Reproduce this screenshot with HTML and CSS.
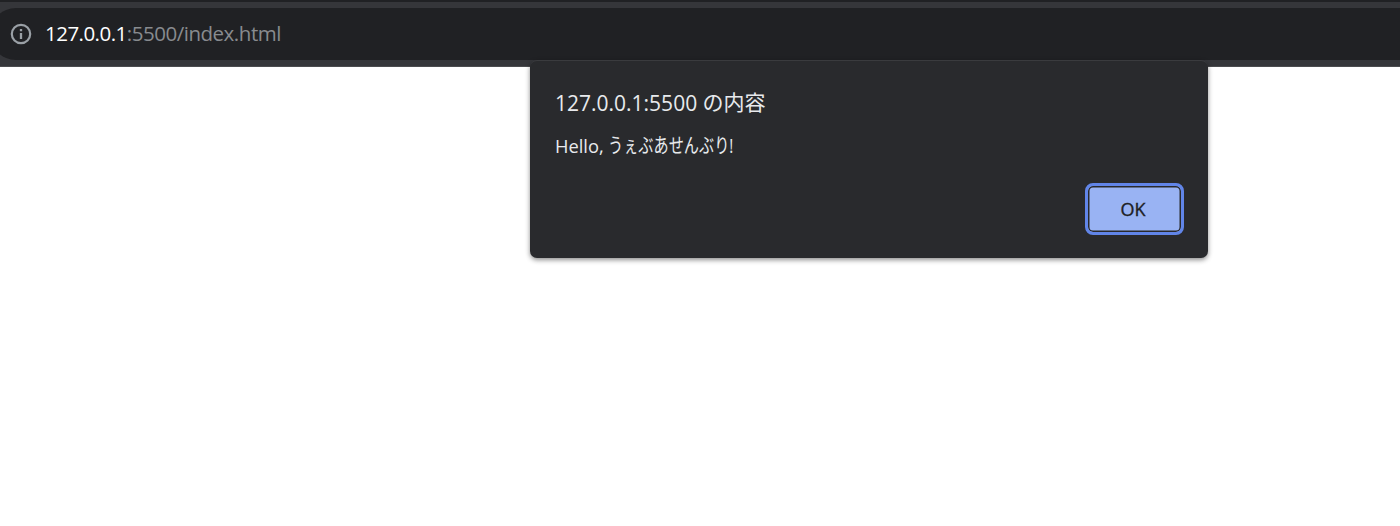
FILE: index.html
```html
<!DOCTYPE html>
<html lang="ja">
<head>
<meta charset="utf-8">
<title>127.0.0.1:5500/index.html</title>
<link rel="stylesheet" href="styles.css">
</head>
<body>
<header class="toolbar">
  <div class="omnibox">
    <svg class="info" viewBox="0 0 22 22" width="22" height="22" aria-hidden="true">
      <circle cx="11" cy="11" r="9.2" fill="none" stroke="currentColor" stroke-width="2.2"/>
      <path d="M11 9.9v6M11 6v2.2" stroke="currentColor" stroke-width="2.3"/>
    </svg>
    <div class="url"><span class="host">127.0.0.1</span>:5500/index.html</div>
  </div>
</header>
<main class="page">
  <section class="dialog" role="alertdialog">
    <h1 class="title"><span class="origin">127.0.0.1:5500</span> <span class="suffix">の内容</span></h1>
    <p class="message"><span class="hello">Hello,</span> <span class="kana">うぇぶあせんぶり!</span></p>
    <div class="actions"><button class="ok">OK</button></div>
  </section>
</main>
</body>
</html>
```

FILE: styles.css
```css
* { box-sizing: border-box; }
body {
  margin: 0;
  height: 526px;
  overflow: hidden;
  background: #fff;
  font-family: "Open Sans", "Noto Sans", "Noto Sans CJK JP", sans-serif;
}
.toolbar {
  height: 67px;
  padding-top: 6px;
  background: #35363a;
  border-top: 2px solid #202124;
  border-bottom: 1px solid #4b4c4f;
}
.omnibox {
  display: flex;
  align-items: center;
  gap: 13.5px;
  height: 52px;
  margin: 0 -30px 0 -10px;
  padding-left: 19.5px;
  border-radius: 26px;
  background: #202124;
}
.info { color: #9aa0a6; }
.url { padding-bottom: 2px; color: #888b8f; font-size: 20.5px; letter-spacing: -.47px; white-space: nowrap; }
.host { color: #fff; letter-spacing: -.53px; }
.dialog {
  position: absolute;
  left: 530px;
  top: 60px;
  width: 677.5px;
  height: 198px;
  padding: 26px 24px 23px 25px;
  display: flex;
  flex-direction: column;
  border-top: 1px solid #3a3b3e;
  border-radius: 7px;
  background: #292a2d;
  color: #e8eaed;
  box-shadow: 0 2px 5px rgba(0,0,0,.45);
}
.title { margin: 0; font-size: 21px; line-height: 32px; font-weight: 400; white-space: nowrap; }
.suffix { display: inline-block; transform: translateY(-1px); }
.message { margin: 12px 0 0; font-size: 18.3px; line-height: 30px; white-space: nowrap; }
.kana {
  display: inline-block;
  font-size: 20.5px;
  line-height: 28px;
  transform: scaleX(.74);
  transform-origin: 0 50%;
}
.actions { display: flex; justify-content: flex-end; margin-top: auto; }
.ok {
  width: 99px;
  height: 52px;
  padding: 0 2px 0 0;
  border: 3px solid #6185e8;
  border-radius: 8px;
  background: #99b3f3;
  box-shadow: inset 0 0 0 1.5px #292a2d;
  color: #202124;
  font: 500 18px "Open Sans", sans-serif;
  -webkit-text-stroke: .35px #202124;
}
```
